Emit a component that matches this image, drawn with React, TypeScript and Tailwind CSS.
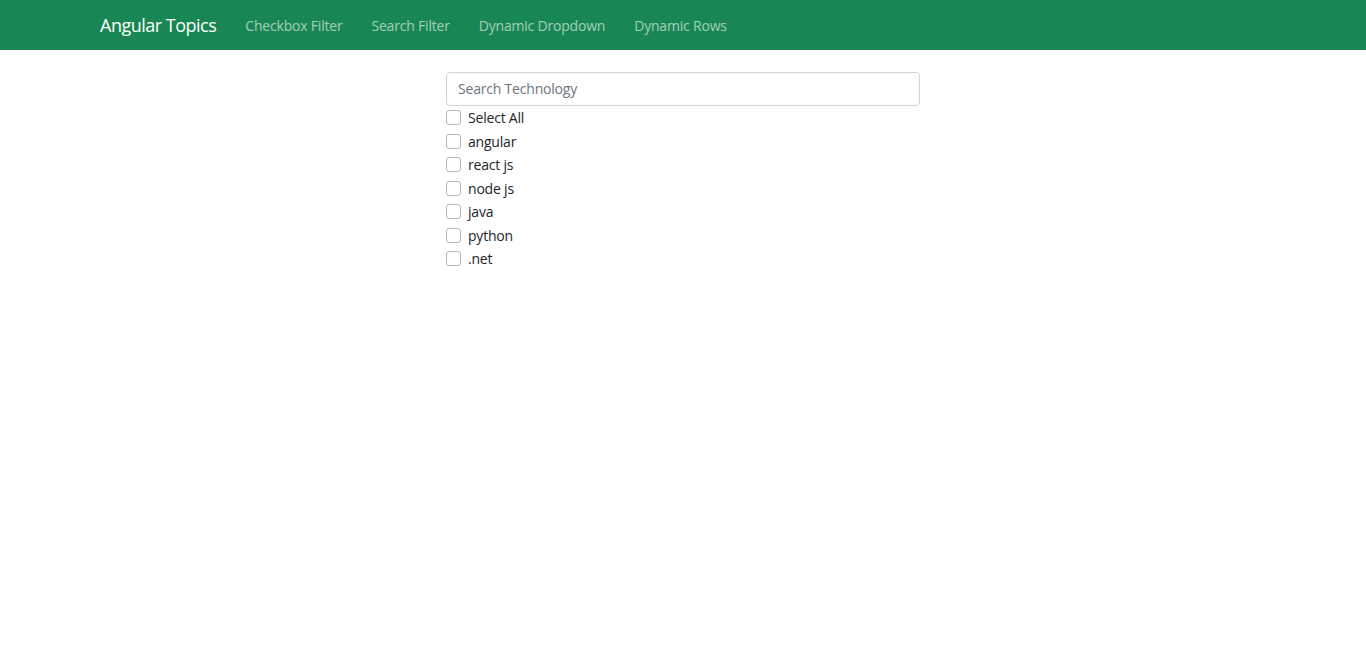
import React from "react";

const items = ["Select All", "angular", "react js", "node js", "java", "python", ".net"];

export default function App() {
  return (
    <div className="min-h-screen bg-white" style={{ fontFamily: '"Open Sans", "Noto Sans", sans-serif' }}>
      <nav className="h-[50px] bg-[#198754] flex items-center pl-[100px]">
        <span className="text-white text-[18px] mr-[29px] tracking-[-0.5px]">Angular Topics</span>
        <div className="flex items-center gap-[29px] text-[14px] text-[rgba(255,255,255,0.6)] tracking-[-0.2px]">
          <span>Checkbox Filter</span>
          <span>Search Filter</span>
          <span>Dynamic Dropdown</span>
          <span>Dynamic Rows</span>
        </div>
      </nav>
      <div className="flex justify-center pt-[22px]">
        <div className="w-[474px]">
          <div className="h-[34px] border border-[#ced4da] rounded-[4px] flex items-center px-[11px] text-[14px] text-[#6c757d] tracking-[-0.2px]">
            <span className="-mt-[1px]">Search Technology</span>
          </div>
          <div>
            {items.map((t) => (
              <div key={t} className="flex items-center h-[23.5px] text-[14px] text-[#212529] tracking-[-0.2px]">
                <span className="w-[15px] h-[15px] border border-[#b8b8b8] rounded-[3px] mr-[7px] bg-white" />
                {t}
              </div>
            ))}
          </div>
        </div>
      </div>
    </div>
  );
}
